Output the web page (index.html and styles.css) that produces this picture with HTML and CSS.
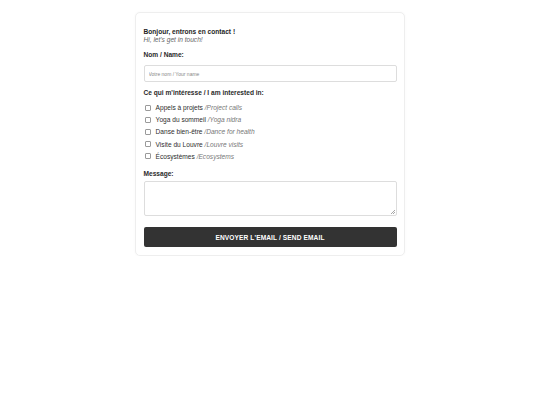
FILE: index.html
```html
<!DOCTYPE html>
<html lang="fr">
<head>
<meta charset="utf-8">
<title>Contact</title>
<link rel="stylesheet" href="styles.css">
</head>
<body>
<form class="card">
  <div class="intro">
    <div class="intro-title">Bonjour, entrons en contact !</div>
    <div class="intro-sub">Hi, let's get in touch!</div>
  </div>
  <label class="label label-name" for="name">Nom / Name:</label>
  <input class="text-input" id="name" type="text" placeholder="Votre nom / Your name">
  <div class="label label-interest">Ce qui m'intéresse / I am interested in:</div>
  <div class="checks">
    <label class="check"><input type="checkbox"><span class="fr">Appels à projets&nbsp;</span><span class="en">/Project calls</span></label>
    <label class="check"><input type="checkbox"><span class="fr">Yoga du sommeil&nbsp;</span><span class="en">/Yoga nidra</span></label>
    <label class="check"><input type="checkbox"><span class="fr">Danse bien-être&nbsp;</span><span class="en">/Dance for health</span></label>
    <label class="check"><input type="checkbox"><span class="fr">Visite du Louvre&nbsp;</span><span class="en">/Louvre visits</span></label>
    <label class="check"><input type="checkbox"><span class="fr">Écosystèmes&nbsp;</span><span class="en">/Ecosystems</span></label>
  </div>
  <label class="label label-message" for="message">Message:</label>
  <textarea class="text-area" id="message"></textarea>
  <button class="send" type="button">ENVOYER L'EMAIL / SEND EMAIL</button>
</form>
</body>
</html>
```

FILE: styles.css
```css
html, body {
  margin: 0;
  padding: 0;
  background: #ffffff;
}

body {
  font-family: "Liberation Sans", Arial, sans-serif;
  font-size: 6.6px;
  color: #333333;
}

.card {
  box-sizing: border-box;
  width: 270px;
  margin: 12px auto 0;
  padding: 15px 7.5px 7.5px;
  border: 1px solid #eeeeee;
  border-radius: 5px;
  box-shadow: 0 0 3px rgba(0, 0, 0, 0.03);
  background: #ffffff;
  display: flex;
  flex-direction: column;
}

.intro-title {
  font-weight: bold;
  color: #1e1e1e;
  line-height: 8px;
}

.intro-sub {
  font-style: italic;
  color: #666666;
  line-height: 8px;
}

.label {
  display: block;
  font-weight: bold;
  color: #2a2a2a;
  line-height: 8px;
}

.label-name {
  margin-top: 6.8px;
}

.text-input {
  box-sizing: border-box;
  margin: 6.5px 0 0;
  height: 16.5px;
  width: 100%;
  padding: 0 4px;
  border: 1px solid #dddddd;
  border-radius: 2px;
  font-family: "Liberation Sans", Arial, sans-serif;
  font-size: 5px;
  color: #333333;
  outline: none;
}

.text-input::placeholder {
  color: #888888;
}

.label-interest {
  margin-top: 7.6px;
}

.checks {
  margin-top: 4.1px;
  display: flex;
  flex-direction: column;
}

.check {
  display: flex;
  align-items: center;
  height: 12.2px;
  color: #2e2e2e;
}

.check input {
  appearance: none;
  -webkit-appearance: none;
  box-sizing: border-box;
  width: 6px;
  height: 6px;
  margin: 0 4.5px 0 1.6px;
  border: 0.6px solid #9a9a9a;
  border-radius: 1px;
  background: #ffffff;
}

.en {
  font-style: italic;
  color: #777777;
}

.label-message {
  margin-top: 8px;
}

.text-area {
  box-sizing: border-box;
  margin: 2.5px 0 0;
  height: 35px;
  width: 100%;
  border: 1px solid #dddddd;
  border-radius: 2px;
  resize: none;
  font-family: "Liberation Sans", Arial, sans-serif;
  font-size: 6.6px;
  outline: none;
  background-color: #ffffff;
  background-image: linear-gradient(135deg, transparent 0 50%, #a8a8a8 50% 62%, transparent 62% 76%, #a8a8a8 76% 88%, transparent 88%);
  background-size: 5px 5px;
  background-position: right 1px bottom 1px;
  background-repeat: no-repeat;
}

.send {
  box-sizing: border-box;
  margin-top: 11px;
  height: 20.2px;
  width: 100%;
  border: none;
  border-radius: 2px;
  background: #333333;
  color: #ffffff;
  font-family: "Liberation Sans", Arial, sans-serif;
  font-size: 6.6px;
  font-weight: bold;
  letter-spacing: 0.1px;
  cursor: pointer;
}
```
